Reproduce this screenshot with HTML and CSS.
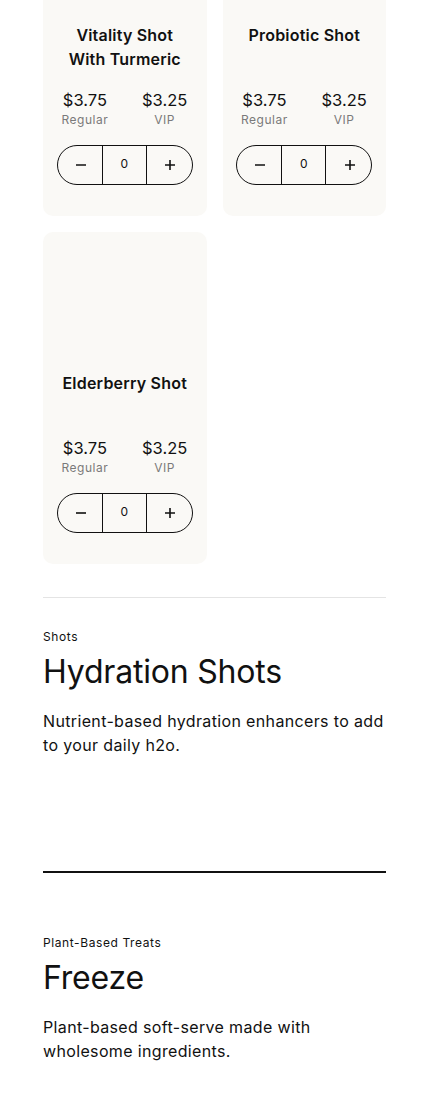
FILE: index.html
```html
<!DOCTYPE html>
<html lang="en">
<head>
<meta charset="utf-8">
<title>Menu</title>
<link rel="stylesheet" href="styles.css">
</head>
<body>
<main class="page">
  <section class="section">
    <div class="grid">
      <article class="card">
        <div class="card-media"></div>
        <h3 class="card-title">Vitality Shot With Turmeric</h3>
        <div class="prices">
          <div class="price"><span class="amount">$3.75</span><span class="tier">Regular</span></div>
          <div class="price"><span class="amount">$3.25</span><span class="tier">VIP</span></div>
        </div>
        <div class="stepper">
          <button class="step" aria-label="Decrease"><svg viewBox="0 0 12 12" width="12" height="12"><path d="M1 6h10" stroke="currentColor" stroke-width="1.6" fill="none"/></svg></button>
          <span class="count">0</span>
          <button class="step" aria-label="Increase"><svg viewBox="0 0 12 12" width="12" height="12"><path d="M1 6h10M6 1v10" stroke="currentColor" stroke-width="1.6" fill="none"/></svg></button>
        </div>
      </article>
      <article class="card">
        <div class="card-media"></div>
        <h3 class="card-title">Probiotic Shot</h3>
        <div class="prices">
          <div class="price"><span class="amount">$3.75</span><span class="tier">Regular</span></div>
          <div class="price"><span class="amount">$3.25</span><span class="tier">VIP</span></div>
        </div>
        <div class="stepper">
          <button class="step" aria-label="Decrease"><svg viewBox="0 0 12 12" width="12" height="12"><path d="M1 6h10" stroke="currentColor" stroke-width="1.6" fill="none"/></svg></button>
          <span class="count">0</span>
          <button class="step" aria-label="Increase"><svg viewBox="0 0 12 12" width="12" height="12"><path d="M1 6h10M6 1v10" stroke="currentColor" stroke-width="1.6" fill="none"/></svg></button>
        </div>
      </article>
      <article class="card">
        <div class="card-media"></div>
        <h3 class="card-title">Elderberry Shot</h3>
        <div class="prices">
          <div class="price"><span class="amount">$3.75</span><span class="tier">Regular</span></div>
          <div class="price"><span class="amount">$3.25</span><span class="tier">VIP</span></div>
        </div>
        <div class="stepper">
          <button class="step" aria-label="Decrease"><svg viewBox="0 0 12 12" width="12" height="12"><path d="M1 6h10" stroke="currentColor" stroke-width="1.6" fill="none"/></svg></button>
          <span class="count">0</span>
          <button class="step" aria-label="Increase"><svg viewBox="0 0 12 12" width="12" height="12"><path d="M1 6h10M6 1v10" stroke="currentColor" stroke-width="1.6" fill="none"/></svg></button>
        </div>
      </article>
    </div>
  </section>

  <hr class="divider">

  <section class="category">
    <p class="eyebrow">Shots</p>
    <h2 class="category-title">Hydration Shots</h2>
    <p class="category-desc">Nutrient-based hydration enhancers to add to your daily h2o.</p>
    <div class="category-body"></div>
  </section>

  <section class="category category-next">
    <p class="eyebrow">Plant-Based Treats</p>
    <h2 class="category-title">Freeze</h2>
    <p class="category-desc">Plant-based soft-serve made with wholesome ingredients.</p>
  </section>
</main>
</body>
</html>
```

FILE: styles.css
```css
* { box-sizing: border-box; }

html, body {
  margin: 0;
  padding: 0;
  background: #ffffff;
}

body {
  font-family: Inter, "Liberation Sans", sans-serif;
  color: #111111;
  overflow: hidden;
}

.page {
  padding: 0 44px 0 43px;
  margin-top: -116px;
}

.grid {
  display: grid;
  grid-template-columns: 1fr 1fr;
  gap: 16px 16px;
}

.card {
  background: #faf9f6;
  border-radius: 10px;
  padding: 16px 2px 31px;
  display: flex;
  flex-direction: column;
  align-items: center;
}

.card-media {
  width: 100%;
  height: 107px;
  margin-bottom: 16px;
}

.card-title {
  margin: 0;
  padding: 0 12px;
  min-height: 48px;
  font-size: 16px;
  line-height: 24px;
  font-weight: 600;
  text-align: center;
  letter-spacing: 0.2px;
}

.prices {
  margin-top: 17px;
  width: 100%;
  display: grid;
  grid-template-columns: 1fr 1fr;
}

.price {
  display: flex;
  flex-direction: column;
  align-items: center;
}

.amount {
  font-size: 16.5px;
  line-height: 24px;
  font-weight: 400;
}

.tier {
  font-size: 12px;
  line-height: 16px;
  color: #7a7a7a;
  letter-spacing: 0.5px;
}

.stepper {
  margin-top: 17px;
  width: 136px;
  height: 40px;
  border: 1px solid #111111;
  border-radius: 20px;
  display: grid;
  grid-template-columns: 44px 1fr 45px;
  overflow: hidden;
}

.step {
  background: transparent;
  border: 0;
  padding: 0;
  margin: 0;
  color: #111111;
  display: flex;
  align-items: center;
  justify-content: center;
  padding-left: 2px;
}

.count {
  border-left: 1px solid #111111;
  border-right: 1px solid #111111;
  display: flex;
  align-items: center;
  justify-content: center;
  font-size: 12px;
  padding-bottom: 4px;
}

.divider {
  border: 0;
  border-top: 1px solid #e4e4e4;
  margin: 33px 0 0;
}

.category {
  padding-top: 30px;
}

.eyebrow {
  margin: 0;
  font-size: 12px;
  line-height: 18px;
  letter-spacing: 0.6px;
}

.category-title {
  margin: 6px 0 0;
  font-size: 32px;
  line-height: 40px;
  font-weight: 400;
  letter-spacing: -0.2px;
}

.category-desc {
  margin: 17px 0 0;
  font-size: 16px;
  line-height: 24px;
  letter-spacing: 0.35px;
}

.category-body {
  height: 116px;
  border-bottom: 2px solid #111111;
}

.category-next {
  padding-top: 61px;
}
```
